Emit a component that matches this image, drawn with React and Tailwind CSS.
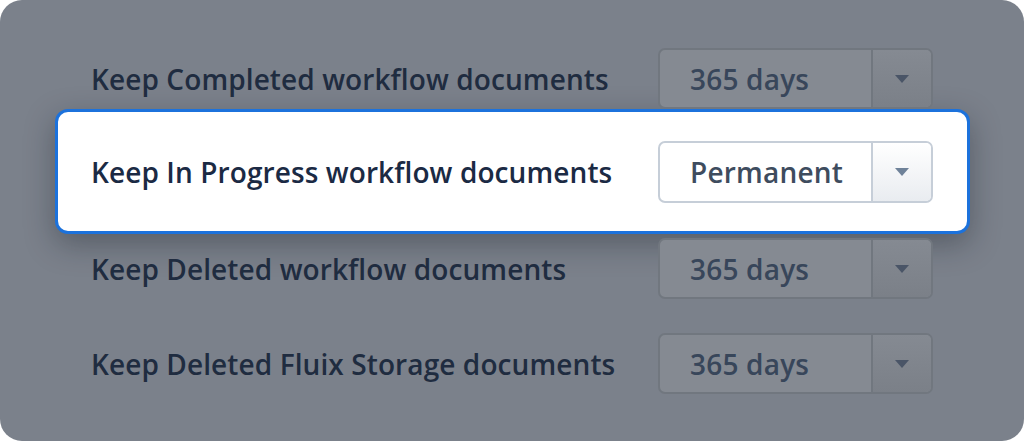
import React from 'react'

const font = { fontFamily: '"Open Sans", "Noto Sans", sans-serif' }

const Arrow = ({ className }) => (
  <svg width="16" height="10" viewBox="0 0 16 10" className={className}>
    <path d="M1 1 H15 L8 9 Z" fill="currentColor" />
  </svg>
)

const DimRow = ({ label, value }) => (
  <div className="h-[95px] flex items-center justify-between">
    <span className="text-[28px] font-semibold tracking-[0.1px] text-[#1f2c40]">{label}</span>
    <div className="flex h-[61px] w-[275px] rounded-[7px] border-2 border-[#71777f] bg-[#858a92] overflow-hidden">
      <div className="flex-1 flex items-center pl-[30px] text-[28px] font-semibold text-[#38465a] tracking-[0.2px]">
        {value}
      </div>
      <div className="w-[60px] border-l-2 border-[#71777f] bg-gradient-to-b from-[#858a92] to-[#7b8088] flex items-center justify-center text-[#4a5567]">
        <Arrow />
      </div>
    </div>
  </div>
)

const ActiveRow = ({ label, value }) => (
  <div className="-ml-[36px] -mr-[37px] -mt-[17px] -mb-[13px] h-[125px] rounded-[13px] border-[3px] border-[#1c72dc] bg-white shadow-[0_10px_30px_rgba(20,25,35,0.35)] flex items-center justify-between pl-[33px] pr-[34px]">
    <span className="text-[28px] font-semibold tracking-[0.1px] text-[#1b2a44]">{label}</span>
    <div className="flex h-[62px] w-[275px] rounded-[7px] border-2 border-[#c6ced8] bg-white overflow-hidden">
      <div className="flex-1 flex items-center pl-[30px] text-[28px] font-semibold text-[#3e4c5e] tracking-[0.2px]">
        {value}
      </div>
      <div className="w-[60px] border-l-2 border-[#c6ced8] bg-gradient-to-b from-white to-[#e9ecf0] flex items-center justify-center text-[#6f8299]">
        <Arrow />
      </div>
    </div>
  </div>
)

export default function App() {
  return (
    <div className="w-[1024px] h-[441px] bg-white" style={font}>
      <div className="w-full h-full rounded-[22px] bg-[#7b818b] pt-[31px] pl-[91px] pr-[91px]">
        <DimRow label="Keep Completed workflow documents" value="365 days" />
        <ActiveRow label="Keep In Progress workflow documents" value="Permanent" />
        <DimRow label="Keep Deleted workflow documents" value="365 days" />
        <DimRow label="Keep Deleted Fluix Storage documents" value="365 days" />
      </div>
    </div>
  )
}
